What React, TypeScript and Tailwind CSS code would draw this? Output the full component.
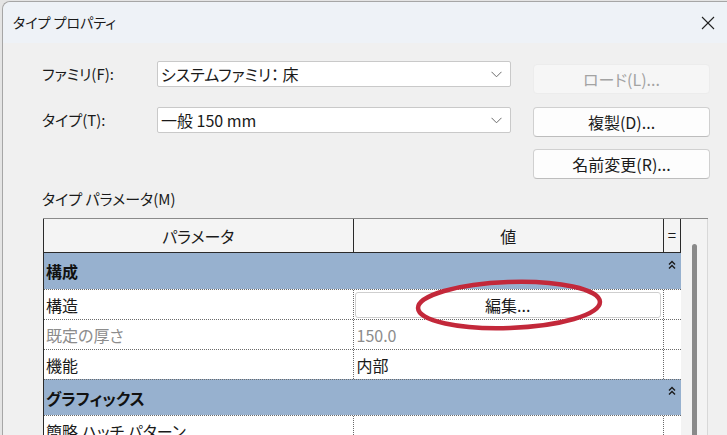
import React from "react";

function Chevron() {
  return (
    <svg width="11" height="7" viewBox="0 0 11 7" className="shrink-0">
      <polyline points="0.5,0.8 5.5,5.8 10.5,0.8" fill="none" stroke="#6b6b6b" strokeWidth="1" />
    </svg>
  );
}

function DoubleUp() {
  return (
    <svg width="8" height="10" viewBox="0 0 8 10">
      <polyline points="1,4.5 4,1.5 7,4.5" fill="none" stroke="#1a1a1a" strokeWidth="1.4" />
      <polyline points="1,8.5 4,5.5 7,8.5" fill="none" stroke="#1a1a1a" strokeWidth="1.4" />
    </svg>
  );
}

function Combo({ text }: { text: string }) {
  return (
    <div className="flex h-[26px] w-[354px] items-center justify-between rounded-[2px] border border-[#c9c9c9] bg-white pl-[3px] pr-[8px] text-[16px] text-[#1a1a1a]">
      <span>{text}</span>
      <Chevron />
    </div>
  );
}

function Btn({ text, disabled }: { text: string; disabled?: boolean }) {
  return (
    <div
      className={
        disabled
          ? "flex h-[30px] w-[177px] items-center justify-center rounded-[4px] border border-[#ececec] bg-[#f6f6f6] text-[16px] text-[#a3a3a3]"
          : "flex h-[30px] w-[177px] items-center justify-center rounded-[4px] border border-[#d0d0d0] border-b-[#bdbdbd] bg-[#fdfdfd] text-[16px] text-[#1a1a1a]"
      }
    >
      {text}
    </div>
  );
}

function Section({ title }: { title: string }) {
  return (
    <div className="flex h-[36px] border-t border-dotted border-[#6a6a6a] bg-[#97b1cf]">
      <div className="flex w-[620px] items-center pl-[2px] text-[16px] font-bold text-[#111]">{title}</div>
      <div className="flex w-[18px] justify-center pt-[6px]">
        <DoubleUp />
      </div>
    </div>
  );
}

function Row({
  name,
  value,
  gray,
  children,
}: {
  name: string;
  value?: string;
  gray?: boolean;
  children?: React.ReactNode;
}) {
  const tc = gray ? "text-[#8c8c8c]" : "text-[#1a1a1a]";
  return (
    <div className="flex h-[30px] border-t border-dotted border-[#6a6a6a] bg-white text-[16px]">
      <div className={"flex w-[309px] items-center pl-[2px] " + tc}>{name}</div>
      <div className={"flex w-[311px] items-center border-l border-dotted border-[#6a6a6a] " + tc}>
        {children ?? <span className="pl-[3px]">{value}</span>}
      </div>
      <div className="w-[18px] border-l border-dotted border-[#6a6a6a]" />
    </div>
  );
}

export default function App() {
  return (
    <div className="h-[435px] w-[727px] overflow-hidden bg-[#e4e4e4] pl-[2px] pt-[1px] font-['Noto_Sans_CJK_JP',sans-serif] [font-feature-settings:'palt']">
      <div className="h-[500px] w-[760px] rounded-tl-[8px] border-l border-t border-[#a6a6a6] bg-[#f0f0f0]">
        {/* title bar */}
        <div className="flex h-[41px] items-center rounded-tl-[8px] bg-[#eef2f7] pl-[10px] pr-[13px]">
          <span className="text-[14px] text-[#1a1a1a]">タイプ プロパティ</span>
          <div className="ml-auto mr-[34px] flex h-[14px] w-[14px] items-center justify-center">
            <svg width="14" height="14" viewBox="0 0 14 14">
              <line x1="1" y1="1" x2="13" y2="13" stroke="#222" strokeWidth="1.1" />
              <line x1="13" y1="1" x2="1" y2="13" stroke="#222" strokeWidth="1.1" />
            </svg>
          </div>
        </div>

        {/* body */}
        <div className="pl-[39px]">
          <div className="flex">
            <div className="flex flex-col gap-[20px] pt-[18px]">
              <div className="flex items-center">
                <span className="w-[115px] text-[15px] text-[#1a1a1a]">ファミリ(F):</span>
                <Combo text="システムファミリ： 床" />
              </div>
              <div className="flex items-center">
                <span className="w-[115px] text-[15px] text-[#1a1a1a]">タイプ(T):</span>
                <Combo text="一般 150 mm" />
              </div>
            </div>
            <div className="ml-[22px] flex flex-col pt-[21px]">
              <Btn text="ロード(L)..." disabled />
              <div className="mt-[13px]">
                <Btn text="複製(D)..." />
              </div>
              <div className="mt-[12px]">
                <Btn text="名前変更(R)..." />
              </div>
            </div>
          </div>

          <div className="mt-[10px] h-[20px] text-[15px] leading-[20px] text-[#1a1a1a]">タイプ パラメータ(M)</div>

          {/* table */}
          <div className="relative ml-[1px] mt-[9px] flex w-[665px] border-t border-[#8a8a8a]">
            <div className="w-[638px] border-l border-[#2a2a2a]">
              <div className="flex h-[34px] border-b border-[#2a2a2a] bg-[#f4f4f4] text-[16px] text-[#1a1a1a]">
                <div className="flex w-[309px] items-center justify-center">パラメータ</div>
                <div className="flex w-[311px] items-center justify-center border-l border-[#2a2a2a]">値</div>
                <div className="flex w-[18px] items-center justify-center border-x border-[#2a2a2a] text-[15px]">=</div>
              </div>
              <div className="flex h-[36px] bg-[#97b1cf]">
                <div className="flex w-[620px] items-center pl-[2px] text-[16px] font-bold text-[#111]">構成</div>
                <div className="flex w-[18px] justify-center pt-[7px]">
                  <DoubleUp />
                </div>
              </div>
              <Row name="構造">
                <div className="ml-[1px] mr-[2px] flex h-[26px] flex-1 items-center justify-center rounded-[3px] border border-[#cfcfcf] bg-white text-[#1a1a1a]">
                  編集...
                </div>
              </Row>
              <Row name="既定の厚さ" value="150.0" gray />
              <Row name="機能" value="内部" />
              <Section title="グラフィックス" />
              <Row name="簡略 ハッチ パターン" value="" />
            </div>
            <div className="flex w-[27px] flex-col border-r border-[#d8d8d8] bg-[#f3f3f3] pt-[25px]">
              <div className="ml-[11px] h-[300px] w-[5px] rounded-t-full bg-[#8a8a8a]" />
            </div>

            <svg
              className="pointer-events-none absolute left-[367px] top-[57px]"
              width="198"
              height="58"
              viewBox="0 0 198 58"
            >
              <ellipse
                cx="99"
                cy="29"
                rx="91"
                ry="23"
                fill="none"
                stroke="#c3283a"
                strokeWidth="4.5"
                transform="rotate(-2 99 29)"
              />
            </svg>
          </div>
        </div>
      </div>
    </div>
  );
}
